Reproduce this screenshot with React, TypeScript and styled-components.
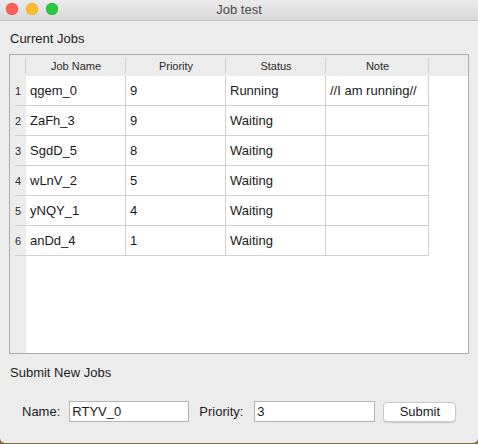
import React, { useState } from 'react'
import styled, { createGlobalStyle } from 'styled-components'

const GlobalStyle = createGlobalStyle`
  html, body {
    margin: 0;
    padding: 0;
    background: #8a6b40;
  }
  body {
    font-family: 'Liberation Sans', Arial, sans-serif;
    font-size: 13px;
    color: #1d1d1d;
  }
`

const Window = styled.div`
  width: 478px;
  height: 443px;
  background: #ececec;
  border-radius: 0 0 5px 5px;
  display: flex;
  flex-direction: column;
  overflow: hidden;
`

const TitleBar = styled.div`
  height: 21px;
  box-sizing: border-box;
  border-bottom: 1px solid #c2c2c2;
  background: linear-gradient(#ebebeb, #d8d8d8);
  display: flex;
  align-items: center;
  position: relative;
  padding-left: 6px;
  gap: 8px;
`

const Light = styled.span<{ color: string; edge: string }>`
  width: 12px;
  height: 12px;
  border-radius: 50%;
  background: ${({ color }) => color};
  box-shadow: inset 0 0 0 0.5px ${({ edge }) => edge};
  margin-top: -2px;
`

const Title = styled.div`
  position: absolute;
  left: 0;
  right: 0;
  top: 2px;
  text-align: center;
  color: #4c4c4c;
  font-size: 13px;
`

const Body = styled.div`
  flex: 1;
  display: flex;
  flex-direction: column;
  padding: 0 9px;
`

const SectionLabel = styled.div<{ top: number }>`
  margin-top: ${({ top }) => top}px;
  padding-left: 1px;
  height: 16px;
  line-height: 16px;
  font-size: 13px;
`

const TableFrame = styled.div`
  margin-top: 7px;
  height: 300px;
  box-sizing: border-box;
  border: 1px solid #acacac;
  background: #fff;
  display: grid;
  grid-template-columns: 16px 100px 100px 100px 103px 1fr;
  grid-template-rows: 21px repeat(6, 30px) 1fr;
`

const HeaderCell = styled.div<{ last?: boolean }>`
  background: #ececec;
  font-size: 11px;
  color: #2a2a2a;
  display: flex;
  align-items: center;
  justify-content: center;
  position: relative;
  &::after {
    content: '';
    display: ${({ last }) => (last ? 'none' : 'block')};
    position: absolute;
    right: 0;
    top: 3px;
    bottom: 3px;
    width: 1px;
    background: #cfcfcf;
  }
`

const RowNumber = styled.div<{ fill?: boolean }>`
  background: #ececec;
  font-size: 11px;
  color: #2a2a2a;
  display: flex;
  align-items: center;
  justify-content: center;
  position: relative;
  &::after {
    content: '';
    display: ${({ fill }) => (fill ? 'none' : 'block')};
    position: absolute;
    left: 5px;
    right: 0;
    bottom: 0;
    height: 1px;
    background: #cfcfcf;
  }
`

const Cell = styled.div`
  border-right: 1px solid #d0d0d0;
  border-bottom: 1px solid #d0d0d0;
  display: flex;
  align-items: center;
  padding-left: 4px;
  font-size: 13px;
  color: #1a1a1a;
  white-space: nowrap;
  overflow: hidden;
`

const Blank = styled.div``

const FormRow = styled.div`
  margin-top: 20px;
  display: flex;
  align-items: center;
  padding-left: 13px;
  height: 21px;
`

const FieldLabel = styled.label<{ gap: number }>`
  margin-right: ${({ gap }) => gap}px;
  font-size: 13px;
`

const TextInput = styled.input<{ w: number; after: number }>`
  width: ${({ w }) => w}px;
  height: 21px;
  box-sizing: border-box;
  border: 1px solid #b4b4b4;
  background: #fff;
  font-family: 'Liberation Sans', Arial, sans-serif;
  font-size: 13px;
  color: #1a1a1a;
  padding: 0 2px;
  outline: none;
  margin-right: ${({ after }) => after}px;
`

const SubmitButton = styled.button`
  width: 73px;
  height: 20px;
  box-sizing: border-box;
  border: 1px solid #c9c9c9;
  border-radius: 4px;
  background: #fff;
  box-shadow: 0 1px 1px rgba(0, 0, 0, 0.15);
  font-family: 'Liberation Sans', Arial, sans-serif;
  font-size: 13px;
  color: #1a1a1a;
  padding: 0;
`

const jobs = [
  { name: 'qgem_0', priority: 9, status: 'Running', note: '//I am running//' },
  { name: 'ZaFh_3', priority: 9, status: 'Waiting', note: '' },
  { name: 'SgdD_5', priority: 8, status: 'Waiting', note: '' },
  { name: 'wLnV_2', priority: 5, status: 'Waiting', note: '' },
  { name: 'yNQY_1', priority: 4, status: 'Waiting', note: '' },
  { name: 'anDd_4', priority: 1, status: 'Waiting', note: '' },
]

export default function App() {
  const [name, setName] = useState('RTYV_0')
  const [priority, setPriority] = useState('3')

  return (
    <>
      <GlobalStyle />
      <Window>
        <TitleBar>
          <Light color="#ff5f57" edge="#e0443e" />
          <Light color="#febc2e" edge="#dea123" />
          <Light color="#28c840" edge="#1aab29" />
          <Title>Job test</Title>
        </TitleBar>
        <Body>
          <SectionLabel top={10}>Current Jobs</SectionLabel>
          <TableFrame>
            <HeaderCell />
            <HeaderCell>Job Name</HeaderCell>
            <HeaderCell>Priority</HeaderCell>
            <HeaderCell>Status</HeaderCell>
            <HeaderCell>Note</HeaderCell>
            <HeaderCell last />
            {jobs.map((job, i) => (
              <React.Fragment key={job.name}>
                <RowNumber>{i + 1}</RowNumber>
                <Cell>{job.name}</Cell>
                <Cell>{job.priority}</Cell>
                <Cell>{job.status}</Cell>
                <Cell>{job.note}</Cell>
                <Blank />
              </React.Fragment>
            ))}
            <RowNumber fill />
          </TableFrame>
          <SectionLabel top={11}>Submit New Jobs</SectionLabel>
          <FormRow>
            <FieldLabel gap={9}>Name:</FieldLabel>
            <TextInput w={120} after={10} value={name} onChange={e => setName(e.target.value)} />
            <FieldLabel gap={11}>Priority:</FieldLabel>
            <TextInput w={121} after={8} value={priority} onChange={e => setPriority(e.target.value)} />
            <SubmitButton>Submit</SubmitButton>
          </FormRow>
        </Body>
      </Window>
    </>
  )
}
